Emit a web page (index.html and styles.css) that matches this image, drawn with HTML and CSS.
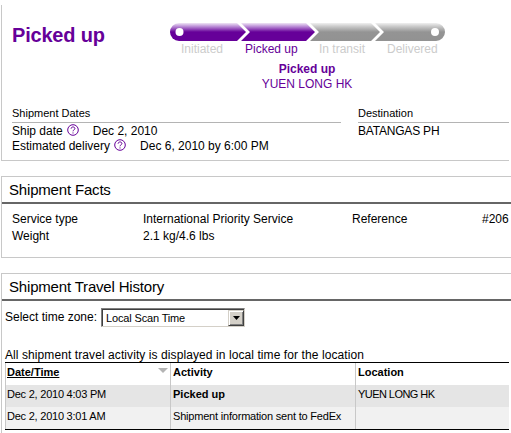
FILE: index.html
```html
<!DOCTYPE html>
<html lang="en">
<head>
<meta charset="utf-8">
<title>Shipment tracking</title>
<link rel="stylesheet" href="styles.css">
</head>
<body>
<section class="panel summary">
  <div class="status">
    <h1>Picked up</h1>
    <div class="progress">
      <svg class="bar" width="276" height="18" viewBox="0 0 276 18">
        <defs>
          <linearGradient id="purple" x1="0" y1="0" x2="0" y2="18" gradientUnits="userSpaceOnUse">
            <stop offset="0" stop-color="#efe5f5"/><stop offset=".2" stop-color="#b98ad5"/><stop offset=".5" stop-color="#660099"/><stop offset="1" stop-color="#660099"/>
          </linearGradient>
          <linearGradient id="grey" x1="0" y1="0" x2="0" y2="18" gradientUnits="userSpaceOnUse">
            <stop offset="0" stop-color="#f0f0f0"/><stop offset=".2" stop-color="#c8c8c8"/><stop offset=".5" stop-color="#949494"/><stop offset="1" stop-color="#929292"/>
          </linearGradient>
        </defs>
        <path fill="url(#purple)" d="M9 0H67L76 9L67 18H9A9 9 0 0 1 9 0Z"/>
        <path fill="url(#purple)" d="M71 0H136L145 9L136 18H71L80 9Z"/>
        <path fill="url(#grey)" d="M140 0H201L210 9L201 18H140L149 9Z"/>
        <path fill="url(#grey)" d="M205 0H266A9 9 0 0 1 266 18H205L214 9Z"/>
        <circle cx="9.5" cy="9" r="4" fill="#fff"/><circle cx="265" cy="9" r="4" fill="#fff"/>
      </svg>
      <div class="steps"><span>Initiated</span><span class="on">Picked up</span><span>In transit</span><span>Delivered</span></div>
      <div class="current"><b>Picked up</b><span>YUEN LONG HK</span></div>
    </div>
  </div>
  <div class="details">
    <div class="dates">
      <h3>Shipment Dates</h3>
      <p><span>Ship date</span><svg class="help" width="12" height="12" viewBox="0 0 12 12"><circle cx="6" cy="6" r="5.3"/><path d="M4.1 4.7C4.1 2.4 7.9 2.4 7.9 4.6C7.9 5.8 6 5.8 6 7.3M6 8.4V9.5"/></svg><span>Dec 2, 2010</span></p>
      <p><span>Estimated delivery</span><svg class="help" width="12" height="12" viewBox="0 0 12 12"><circle cx="6" cy="6" r="5.3"/><path d="M4.1 4.7C4.1 2.4 7.9 2.4 7.9 4.6C7.9 5.8 6 5.8 6 7.3M6 8.4V9.5"/></svg><span>Dec 6, 2010 by 6:00 PM</span></p>
    </div>
    <div class="destination">
      <h3>Destination</h3>
      <p><span class="city">BATANGAS PH</span></p>
    </div>
  </div>
</section>
<section class="panel facts">
  <h2>Shipment Facts</h2>
  <div class="grid">
    <span>Service type</span><span>International Priority Service</span><span>Reference</span><span>#206</span>
    <span>Weight</span><span>2.1 kg/4.6 lbs</span>
  </div>
</section>
<section class="panel history">
  <h2>Shipment Travel History</h2>
  <div class="zone">
    <span>Select time zone:</span>
    <div class="select"><span>Local Scan Time</span><i class="drop"><svg width="7" height="4" viewBox="0 0 7 4"><path d="M0 0H7L3.5 4Z"/></svg></i></div>
  </div>
  <p class="note">All shipment travel activity is displayed in local time for the location</p>
  <div class="table">
    <div class="row head"><div><u>Date/Time</u><svg class="sort" width="10" height="5" viewBox="0 0 10 5"><path d="M0 0H10L5 5Z"/></svg></div><div>Activity</div><div>Location</div></div>
    <div class="row odd"><div class="date">Dec 2, 2010 4:03 PM</div><div><b>Picked up</b></div><div class="place">YUEN LONG HK</div></div>
    <div class="row even"><div class="date">Dec 2, 2010 3:01 AM</div><div class="event">Shipment information sent to FedEx</div><div></div></div>
  </div>
</section>
</body>
</html>
```

FILE: styles.css
```css
* { box-sizing: border-box; margin: 0; padding: 0; }
body { width: 511px; height: 433px; overflow: hidden; background: #fff; color: #000; font: 12px/15px "Liberation Sans", Arial, sans-serif; white-space: nowrap; }
.panel { margin-left: 1px; border: 1px solid #c8c8c8; border-right: 0; }
.summary { margin-top: 5px; width: 508px; height: 156px; border-top: 0; padding: 18px 0 0 10px; }
.status { display: flex; height: 84px; }
h1 { width: 158px; font-size: 20px; line-height: 24px; letter-spacing: -.2px; color: #609; }
.progress { width: 276px; }
.bar { display: block; }
.steps { display: grid; grid-template-columns: 64px 74px 68px 50px; height: 15px; margin-top: 1px; padding-left: 11px; color: #ccc; }
.on, .current { color: #609; }
.current { margin: 5px 2px 0 0; text-align: center; }
.current b, .current span { display: block; }
.details { display: flex; gap: 17px; }
.dates { width: 329px; }
.destination { width: 151px; }
h3 { height: 16px; margin-bottom: 1px; font-size: 11px; font-weight: normal; line-height: 13px; border-bottom: 1px solid #b4b4b4; }
.details p { display: flex; height: 15px; }
.city { letter-spacing: -.2px; }
.help { margin: 0 14px 0 4px; fill: none; stroke: #609; stroke-width: 1; }
.facts { margin-top: 15px; height: 82px; }
h2 { height: 27px; padding-left: 7px; font-size: 15px; font-weight: normal; line-height: 25px; letter-spacing: -.18px; border-bottom: 2px solid #666; }
.grid { display: grid; grid-template-columns: 131px 209px 130px 30px; grid-auto-rows: 17px; padding: 8px 0 0 10px; }
.history { margin-top: 15px; height: 170px; }
.zone { display: flex; height: 35px; padding: 7px 0 0 3px; line-height: 19px; }
.zone > span { width: 96px; }
.select { display: flex; justify-content: space-between; width: 144px; height: 19px; padding-left: 4px; border: 1px solid; border-color: #808080 #d4d0c8 #d4d0c8 #808080; box-shadow: inset 1px 1px #404040; font-size: 11px; line-height: 18px; letter-spacing: -.15px; }
.drop { display: flex; align-items: center; justify-content: center; width: 16px; height: 16px; margin-top: 1px; background: #d4d0c8; border: 1px solid; border-color: #d4d0c8 #404040 #404040 #d4d0c8; box-shadow: inset 1px 1px #fff, inset -1px -1px #808080; }
.note { height: 14px; margin: 12px 0 0 3px; letter-spacing: .085px; }
.table { width: 504px; margin-left: 3px; border: solid #000; border-width: 1px 0; font-size: 11px; }
.row { display: grid; grid-template-columns: 165px 185px 154px; height: 22px; line-height: 18px; }
.row > div { border-left: 1px solid #c8c8c8; padding-left: 2px; }
.row > div:first-child { padding-left: 1px; }
.head { font-weight: bold; }
.head > div:first-child { display: flex; justify-content: space-between; padding-right: 2px; }
.date { letter-spacing: -.23px; }
.event { letter-spacing: -.2px; }
.place { letter-spacing: -.55px; }
.sort { margin-top: 5px; fill: #b4b4b4; }
.odd { background: #e5e5e5; }
.even { background: #f1f1f1; }
```
